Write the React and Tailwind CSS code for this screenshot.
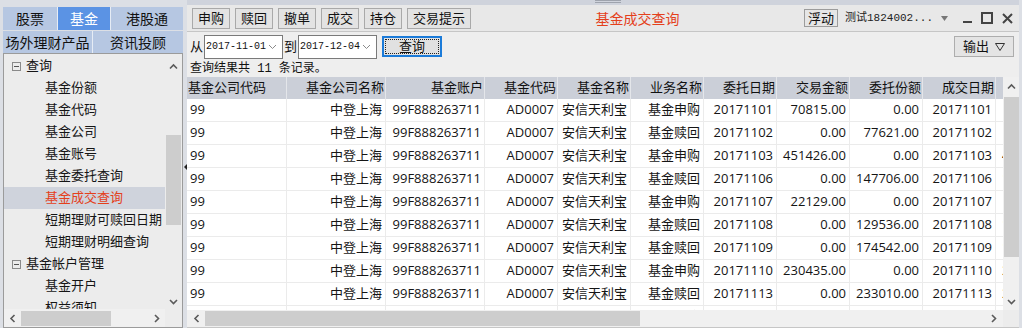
const tabs1 = [
  { label: "股票", w: "w-[54px]" },
  { label: "基金", w: "w-[52px]", active: true },
  { label: "港股通", w: "flex-1" },
];

const treeItems = [
  { label: "查询", group: true },
  { label: "基金份额" },
  { label: "基金代码" },
  { label: "基金公司" },
  { label: "基金账号" },
  { label: "基金委托查询" },
  { label: "基金成交查询", active: true },
  { label: "短期理财可赎回日期" },
  { label: "短期理财明细查询" },
  { label: "基金帐户管理", group: true },
  { label: "基金开户" },
  { label: "权益须知" },
];

const headers = [
  "基金公司代码",
  "基金公司名称",
  "基金账户",
  "基金代码",
  "基金名称",
  "业务名称",
  "委托日期",
  "交易金额",
  "委托份额",
  "成交日期",
  "成交金额",
];

const trades = [
  ["基金申购", "20171101", "70815.00", "0.00"],
  ["基金赎回", "20171102", "0.00", "77621.00"],
  ["基金申购", "20171103", "451426.00", "0.00"],
  ["基金赎回", "20171106", "0.00", "147706.00"],
  ["基金申购", "20171107", "22129.00", "0.00"],
  ["基金赎回", "20171108", "0.00", "129536.00"],
  ["基金赎回", "20171109", "0.00", "174542.00"],
  ["基金申购", "20171110", "230435.00", "0.00"],
  ["基金赎回", "20171113", "0.00", "233010.00"],
  ["基金申购", "20171114", "35000.00", "0.00"],
];

const rows = trades.map(([biz, date, amt, share]) => [
  "99",
  "中登上海",
  "99F888263711",
  "AD0007",
  "安信天利宝",
  biz,
  date,
  amt,
  share,
  date,
  amt === "0.00" ? share : amt,
]);

const gridCols =
  "grid grid-cols-[100px_99px_99px_73px_73px_73px_73px_73px_73px_73px_73px]";

const Chevron = ({ dir }) => {
  const d = {
    up: "M1 5.5 L4.5 2 L8 5.5",
    down: "M1 2 L4.5 5.5 L8 2",
    left: "M5.5 1 L2 4.5 L5.5 8",
    right: "M2 1 L5.5 4.5 L2 8",
  }[dir];
  const size = dir === "up" || dir === "down" ? { w: 9, h: 7 } : { w: 7, h: 9 };
  return (
    <svg width={size.w} height={size.h} viewBox={`0 0 ${size.w} ${size.h}`}>
      <path d={d} fill="none" stroke="#5a5a5a" strokeWidth="1.6" />
    </svg>
  );
};

const ToolButton = ({ children, className = "" }) => (
  <button
    className={`h-[21px] px-[5px] border border-[#a9a9a9] bg-[#e3e3e3] text-[13px] leading-none text-[#111] ${className}`}
  >
    {children}
  </button>
);

const DateBox = ({ value }) => (
  <div className="h-[24px] w-[79px] flex items-center justify-between border border-[#7a7a7a] bg-white pl-[1px] pr-[5px]">
    <span className="font-['Liberation_Mono',monospace] text-[10px] text-[#111] tracking-[0px]">
      {value}
    </span>
    <svg width="9" height="6" viewBox="0 0 9 6">
      <path d="M1 1 L4.5 4.5 L8 1" fill="none" stroke="#8a8a8a" strokeWidth="1" />
    </svg>
  </div>
);

const Sidebar = () => (
  <div className="w-[183px] flex flex-col pt-[7px] pl-[3px]">
    {/* Tabs */}
    <div className="flex gap-px h-[23px] bg-[#e6ecf5]">
      {tabs1.map((t) => (
        <div
          key={t.label}
          className={`${t.w} flex items-center justify-center text-[14px] ${
            t.active ? "bg-[#5b93e4] text-white" : "bg-[#b6c7e2] text-[#111]"
          }`}
        >
          {t.label}
        </div>
      ))}
    </div>
    <div className="flex gap-px h-[22px] mt-px bg-[#e6ecf5]">
      <div className="w-[89px] flex items-center justify-center text-[14px] bg-[#b6c7e2] text-[#111]">
        场外理财产品
      </div>
      <div className="flex-1 flex items-center justify-center text-[14px] bg-[#b6c7e2] text-[#111]">
        资讯投顾
      </div>
    </div>

    {/* Tree */}
    <div className="flex-1 flex flex-col border border-[#9b9b9b] bg-[#ececec] overflow-hidden">
      <div className="flex-1 flex min-h-0">
        <div className="flex-1 overflow-hidden pt-px">
          {treeItems.map((it) => (
            <div
              key={it.label}
              className={`h-[22px] flex items-center whitespace-nowrap text-[13px] ${
                it.active ? "bg-[#cfd3dc] text-[#e4401b]" : "text-[#151515]"
              } ${it.group ? "pl-[8px]" : "pl-[41px]"}`}
            >
              {it.group && (
                <span className="w-[9px] h-[9px] border border-[#8a8a8a] flex items-center justify-center mr-[5px]">
                  <span className="w-[5px] h-px bg-[#555]" />
                </span>
              )}
              {it.label}
            </div>
          ))}
        </div>
        <div className="w-[17px] flex flex-col items-center bg-[#ececec]">
          <div className="h-[16px] flex items-center justify-center mt-[4px]">
            <Chevron dir="up" />
          </div>
          <div className="mt-[61px] w-[15px] h-[90px] bg-[#cdcdcd]" />
          <div className="flex-1" />
          <div className="h-[16px] flex items-center justify-center">
            <Chevron dir="down" />
          </div>
        </div>
      </div>
      <div className="h-[18px] flex items-center bg-[#f0f0f0]">
        <div className="w-[17px] flex justify-center">
          <Chevron dir="left" />
        </div>
        <div className="w-[90px] h-[15px] bg-[#cdcdcd]" />
        <div className="flex-1" />
        <div className="w-[17px] flex justify-center">
          <Chevron dir="right" />
        </div>
        <div className="w-[17px] h-full bg-[#ececec]" />
      </div>
    </div>
  </div>
);

const Splitter = () => (
  <div className="w-[4px] flex items-center justify-center pt-[6px] bg-[#dcdfe5]">
    <svg width="3" height="6" viewBox="0 0 3 6">
      <path d="M3 0 L0 3 L3 6 Z" fill="#222" />
    </svg>
  </div>
);

const ResultTable = () => (
  <div className="flex-1 flex min-h-0">
    <div className="w-[816px] overflow-hidden bg-white">
      <div className={`${gridCols} h-[22px] bg-[#cbcfd8]`}>
        {headers.map((h, i) => (
          <div
            key={h}
            className={`flex items-center text-[13px] text-[#111] border-r border-[#e4e6ea] whitespace-nowrap overflow-hidden ${
              i === 0 ? "pl-px" : "justify-end pr-px"
            }`}
          >
            {h}
          </div>
        ))}
      </div>
      {rows.map((r, ri) => (
        <div key={ri} className={`${gridCols} h-[23px] border-b border-[#ebebeb]`}>
          {r.map((c, ci) => (
            <div
              key={ci}
              className={`flex items-center text-[13px] text-[#151515] border-r border-[#ebebeb] whitespace-nowrap overflow-hidden ${
                ci === 0 ? "pl-[3px]" : "justify-end pr-[3px]"
              }`}
            >
              {c}
            </div>
          ))}
        </div>
      ))}
    </div>
    <div className="w-[16px] flex flex-col items-center bg-[#f0f0f0]">
      <div className="h-[18px] flex items-center justify-center">
        <Chevron dir="up" />
      </div>
      <div className="mt-[2px] w-[15px] h-[160px] bg-[#cdcdcd]" />
      <div className="flex-1" />
      <div className="h-[18px] flex items-center justify-center">
        <Chevron dir="down" />
      </div>
    </div>
  </div>
);

const MainPanel = () => (
  <div className="w-[832px] flex flex-col">
    {/* top strip */}
    <div className="h-[5px] flex justify-center bg-[#cfd3dc]">
      <div className="ml-[10px] w-[26px] h-[3px] border-y border-[#9ea3ad]" />
    </div>

    {/* toolbar */}
    <div className="h-[27px] flex items-center gap-[5px] pl-[5px] pr-[6px] bg-[#e8e8e8] border-b border-[#c6c6c6]">
      <ToolButton>申购</ToolButton>
      <ToolButton>赎回</ToolButton>
      <ToolButton>撤单</ToolButton>
      <ToolButton>成交</ToolButton>
      <ToolButton>持仓</ToolButton>
      <ToolButton>交易提示</ToolButton>
      <div className="flex-1 text-center text-[14px] text-[#e4401b]">基金成交查询</div>
      <button className="h-[18px] px-[3px] border border-[#9c9c9c] bg-[#e6e6e6] text-[13px] leading-none text-[#111]">
        浮动
      </button>
      <span className="ml-[2px] text-[11px] text-[#222] font-['Liberation_Mono','Noto_Sans_CJK_SC',monospace]">
        测试1824002...
      </span>
      <svg width="7" height="5" viewBox="0 0 7 5" className="ml-[3px]">
        <path d="M0 0 L7 0 L3.5 5 Z" fill="#777" />
      </svg>
      <div className="flex items-center gap-[9px] ml-[10px]">
        <svg width="9" height="12" viewBox="0 0 9 12">
          <rect x="0" y="9" width="9" height="2" fill="#444" />
        </svg>
        <svg width="12" height="12" viewBox="0 0 12 12">
          <rect x="1" y="1" width="10" height="10" fill="none" stroke="#444" strokeWidth="2" />
        </svg>
        <svg width="11" height="11" viewBox="0 0 11 11">
          <path d="M1 1 L10 10 M10 1 L1 10" stroke="#444" strokeWidth="2" />
        </svg>
      </div>
    </div>

    {/* query row */}
    <div className="h-[29px] flex items-center bg-[#eeeeee] pl-[3px] pr-[5px]">
      <span className="text-[13px] text-[#111] mr-px">从</span>
      <DateBox value="2017-11-01" />
      <span className="text-[13px] text-[#111] mx-px">到</span>
      <DateBox value="2017-12-04" />
      <button className="ml-[5px] h-[21px] w-[60px] border-2 border-[#1b7bd9] bg-[#e1e1e1] p-px">
        <span className="flex h-full items-center justify-center border border-dotted border-[#222] text-[13px] text-[#111]">
          查询
        </span>
      </button>
      <div className="flex-1" />
      <button className="h-[21px] w-[60px] border border-[#adadad] bg-[#e4e4e4] flex items-center justify-center gap-[6px] text-[13px] text-[#111]">
        输出
        <svg width="10" height="8" viewBox="0 0 10 8">
          <path d="M0.5 0.5 L9.5 0.5 L5 7.5 Z" fill="none" stroke="#333" strokeWidth="1" />
        </svg>
      </button>
    </div>

    {/* result text */}
    <div className="h-[16px] flex items-center bg-[#eeeeee] pl-[3px] text-[12px] text-[#111] font-['Liberation_Mono','Noto_Sans_CJK_SC',monospace] whitespace-pre">
      查询结果共 11 条记录。
    </div>

    <ResultTable />

    {/* horizontal scrollbar */}
    <div className="h-[17px] flex items-center bg-[#f0f0f0]">
      <div className="w-[18px] flex justify-center">
        <Chevron dir="left" />
      </div>
      <div className="w-[435px] h-[15px] bg-[#cdcdcd]" />
      <div className="flex-1" />
      <div className="w-[20px] flex justify-center">
        <Chevron dir="right" />
      </div>
      <div className="w-[16px] h-full bg-[#ececec]" />
    </div>
    <div className="h-px bg-[#c6c6c6]" />
  </div>
);

const App = () => {
  return (
    <div className="w-[1022px] h-[328px] flex overflow-hidden bg-[#dcdfe5] font-['Open_Sans','Noto_Sans_CJK_SC',sans-serif]">
      <Sidebar />
      <Splitter />
      <MainPanel />
    </div>
  );
};

export default App;
